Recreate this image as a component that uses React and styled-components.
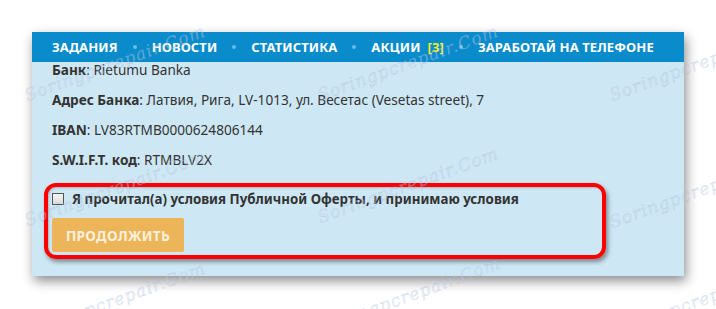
import React from 'react';
import styled, { createGlobalStyle } from 'styled-components';

const GlobalStyle = createGlobalStyle`
  html, body {
    margin: 0;
    padding: 0;
    background: #ffffff;
  }
  body {
    font-family: 'Noto Sans', 'Open Sans', sans-serif;
  }
`;

const Page = styled.div`
  position: relative;
  width: 716px;
  height: 309px;
  padding: 32px 0 0 32px;
  box-sizing: border-box;
  overflow: hidden;
`;

const Card = styled.div`
  position: relative;
  width: 652px;
  background: #cde7f4;
  box-shadow: 2px 5px 11px rgba(0, 0, 0, 0.45);
`;

const Nav = styled.nav`
  display: flex;
  align-items: center;
  height: 30px;
  padding-left: 20px;
  background: #0a8bcb;
`;

const NavItem = styled.span`
  color: #ffffff;
  font-size: 13px;
  font-weight: 700;
  letter-spacing: 0.1px;
  white-space: nowrap;
`;

const Count = styled.span`
  color: #f2ef27;
  margin-left: 7px;
`;

const Dot = styled.span`
  width: 4px;
  height: 4px;
  margin: 0 15px;
  border-radius: 50%;
  background: #6dbbe3;
`;

const Body = styled.div`
  padding: 0 20px 24px;
`;

const Row = styled.div`
  font-size: 13.6px;
  line-height: 16px;
  color: #333333;
  margin-bottom: 14px;
`;

const Label = styled.b`
  font-weight: 700;
`;

const Agree = styled.label`
  display: flex;
  align-items: center;
  gap: 8px;
  margin-top: 23px;
  font-size: 13.3px;
  line-height: 16px;
  font-weight: 700;
  color: #333333;
`;

const Box = styled.span`
  width: 10px;
  height: 10px;
  border: 1px solid #555555;
  background: linear-gradient(#f4f4f4, #dcdcdc);
`;

const Button = styled.button`
  display: block;
  margin-top: 11px;
  width: 132px;
  height: 34px;
  border: none;
  border-radius: 2px;
  background: #ecb55a;
  color: #fbf0dd;
  font-family: inherit;
  font-size: 13.6px;
  font-weight: 700;
  letter-spacing: 0.3px;
`;

const Highlight = styled.div`
  position: absolute;
  left: 12px;
  top: 151px;
  width: 562px;
  height: 76px;
  box-sizing: border-box;
  border: 4px solid #ff0000;
  border-radius: 12px;
  box-shadow: 2px 3px 4px rgba(0, 0, 0, 0.4), inset 1px 1px 2px rgba(0, 0, 0, 0.2);
  pointer-events: none;
`;

const Mark = styled.span`
  position: absolute;
  transform: translate(-50%, -50%) rotate(-20deg);
  font-family: 'DejaVu Serif', serif;
  font-style: italic;
  font-size: 17px;
  letter-spacing: 1px;
  color: rgba(205, 218, 240, 0.4);
  -webkit-text-stroke: 0.4px rgba(130, 150, 200, 0.3);
  white-space: nowrap;
  pointer-events: none;
`;

const marks = [
  [115, 63], [408, 63], [700, 63],
  [115, 188], [408, 185], [700, 190],
  [115, 300], [410, 295], [700, 300],
];

const navItems = ['ЗАДАНИЯ', 'НОВОСТИ', 'СТАТИСТИКА', 'АКЦИИ', 'ЗАРАБОТАЙ НА ТЕЛЕФОНЕ'];

export default function App() {
  return (
    <>
      <GlobalStyle />
      <Page>
        <Card>
          <Nav>
            {navItems.map((item, i) => (
              <React.Fragment key={item}>
                {i > 0 && <Dot />}
                <NavItem>
                  {item}
                  {item === 'АКЦИИ' && <Count>[3]</Count>}
                </NavItem>
              </React.Fragment>
            ))}
          </Nav>
          <Body>
            <Row><Label>Банк</Label>: Rietumu Banka</Row>
            <Row><Label>Адрес Банка</Label>: Латвия, Рига, LV-1013, ул. Весетас (Vesetas street), 7</Row>
            <Row><Label>IBAN</Label>: LV83RTMB0000624806144</Row>
            <Row><Label>S.W.I.F.T. код</Label>: RTMBLV2X</Row>
            <Agree>
              <Box />
              Я прочитал(а) условия Публичной Оферты, и принимаю условия
            </Agree>
            <Button>ПРОДОЛЖИТЬ</Button>
          </Body>
          <Highlight />
        </Card>
        {marks.map(([x, y]) => (
          <Mark key={`${x}-${y}`} style={{ left: x, top: y }}>Soringpcrepair.Com</Mark>
        ))}
      </Page>
    </>
  );
}
